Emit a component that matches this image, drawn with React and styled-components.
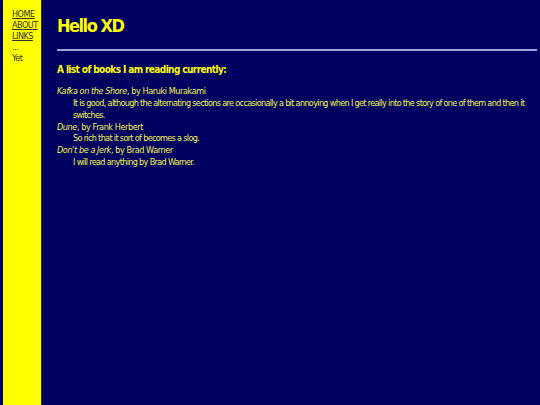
import React from "react";
import styled, { createGlobalStyle } from "styled-components";

const Global = createGlobalStyle`
  html, body { margin: 0; padding: 0; background: #000060; }
  body { font-family: "DejaVu Sans Condensed", "DejaVu Sans", sans-serif; }
`;

const Page = styled.div`
  display: flex;
  min-height: 100vh;
`;

const Sidebar = styled.nav`
  width: 29px;
  margin-left: 3px;
  padding: 9px 0 0 9px;
  background: #ffff00;
  border-right: 1px solid #333300;
  font-size: 9px;
  letter-spacing: -0.5px;
  line-height: 11px;
  color: #333333;
  display: flex;
  flex-direction: column;
`;

const NavLink = styled.a`
  color: #333333;
  text-decoration: underline;
`;

const NavText = styled.span`
  color: #333333;
`;

const Main = styled.main`
  flex: 1;
  margin: 0 3px 0 15px;
  padding-top: 14px;
  color: #ffff00;
`;

const Title = styled.h1`
  margin: 0;
  font-size: 18px;
  letter-spacing: -1.5px;
  line-height: 23px;
  font-weight: bold;
`;

const Rule = styled.hr`
  margin: 12px 0 0;
  border: none;
  height: 2px;
  background: #a0a0e0;
`;

const Sub = styled.h2`
  margin: 12px 0 0;
  font-size: 10px;
  letter-spacing: -0.6px;
  line-height: 14px;
  font-weight: bold;
`;

const List = styled.dl`
  margin: 9px 0 0;
  font-size: 9px;
  line-height: 11.85px;
  color: #f4f450;
`;

const Term = styled.dt`
  margin: 0;
  letter-spacing: -0.4px;
`;

const Desc = styled.dd`
  margin: 0 0 0 16px;
  letter-spacing: -0.66px;
`;

const books = [
  ["Kafka on the Shore", "Haruki Murakami", "It is good, although the alternating sections are occasionally a bit annoying when I get really into the story of one of them and then it switches."],
  ["Dune", "Frank Herbert", "So rich that it sort of becomes a slog."],
  ["Don't be a Jerk", "Brad Warner", "I will read anything by Brad Warner."],
];

export default function App() {
  return (
    <>
      <Global />
      <Page>
        <Sidebar>
          <NavLink href="#">HOME</NavLink>
          <NavLink href="#">ABOUT</NavLink>
          <NavLink href="#">LINKS</NavLink>
          <NavText>...</NavText>
          <NavText>Yet</NavText>
        </Sidebar>
        <Main>
          <Title>Hello XD</Title>
          <Rule />
          <Sub>A list of books I am reading currently:</Sub>
          <List>
            {books.map(([t, a, d]) => (
              <React.Fragment key={t}>
                <Term><i>{t}</i>, by {a}</Term>
                <Desc>{d}</Desc>
              </React.Fragment>
            ))}
          </List>
        </Main>
      </Page>
    </>
  );
}
